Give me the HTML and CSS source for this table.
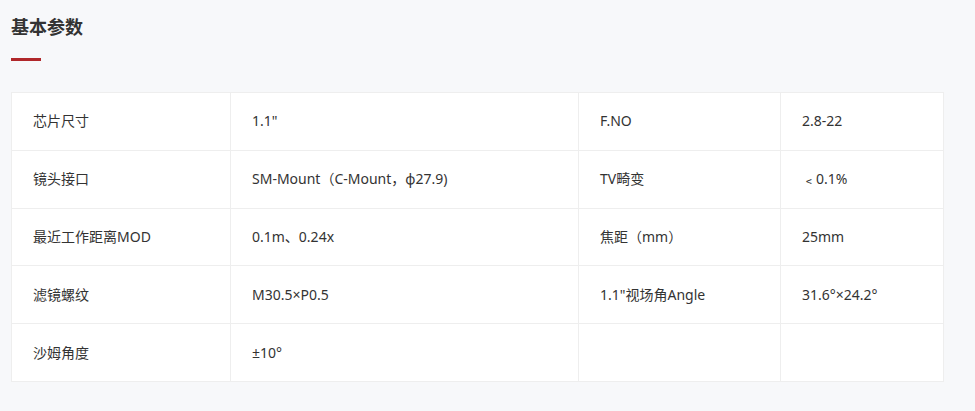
FILE: index.html
```html
<!DOCTYPE html>
<html lang="zh-CN">
<head>
<meta charset="utf-8">
<title>基本参数</title>
<link rel="stylesheet" href="styles.css">
</head>
<body>
<section class="params">
  <h2 class="params-title">基本参数</h2>
  <div class="params-bar"></div>
  <table class="params-table">
    <colgroup>
      <col class="c1"><col class="c2"><col class="c3"><col class="c4">
    </colgroup>
    <tr><td>芯片尺寸</td><td>1.1"</td><td>F.NO</td><td>2.8-22</td></tr>
    <tr><td>镜头接口</td><td>SM-Mount（C-Mount，φ27.9)</td><td>TV畸变</td><td>﹤0.1%</td></tr>
    <tr><td>最近工作距离MOD</td><td>0.1m、0.24x</td><td>焦距（mm）</td><td>25mm</td></tr>
    <tr><td>滤镜螺纹</td><td>M30.5×P0.5</td><td>1.1"视场角Angle</td><td>31.6°×24.2°</td></tr>
    <tr><td>沙姆角度</td><td>±10°</td><td></td><td></td></tr>
  </table>
</section>
</body>
</html>
```

FILE: styles.css
```css
html, body {
  margin: 0;
  padding: 0;
  background: #f7f8fa;
}
body {
  font-family: "Noto Sans", "Noto Sans CJK SC", sans-serif;
  color: #333;
}
.params {
  padding: 13px 0 0 11px;
}
.params-title {
  margin: 0;
  font-family: "Noto Sans CJK SC", sans-serif;
  font-size: 18px;
  line-height: 26px;
  font-weight: 700;
  color: #333;
}
.params-bar {
  width: 30px;
  height: 3px;
  background: #b0272a;
  margin-top: 19px;
}
.params-table {
  margin-top: 31px;
  width: 932px;
  border-collapse: collapse;
  background: #fff;
  table-layout: fixed;
}
.c1 { width: 219px; }
.c2 { width: 348px; }
.c3 { width: 202px; }
.c4 { width: 163px; }
.params-table td {
  border: 1px solid #eeeeee;
  height: 57.8px;
  padding: 0 0 0 21px;
  font-size: 14px;
  line-height: 20px;
  color: #333;
  box-sizing: border-box;
}
```
